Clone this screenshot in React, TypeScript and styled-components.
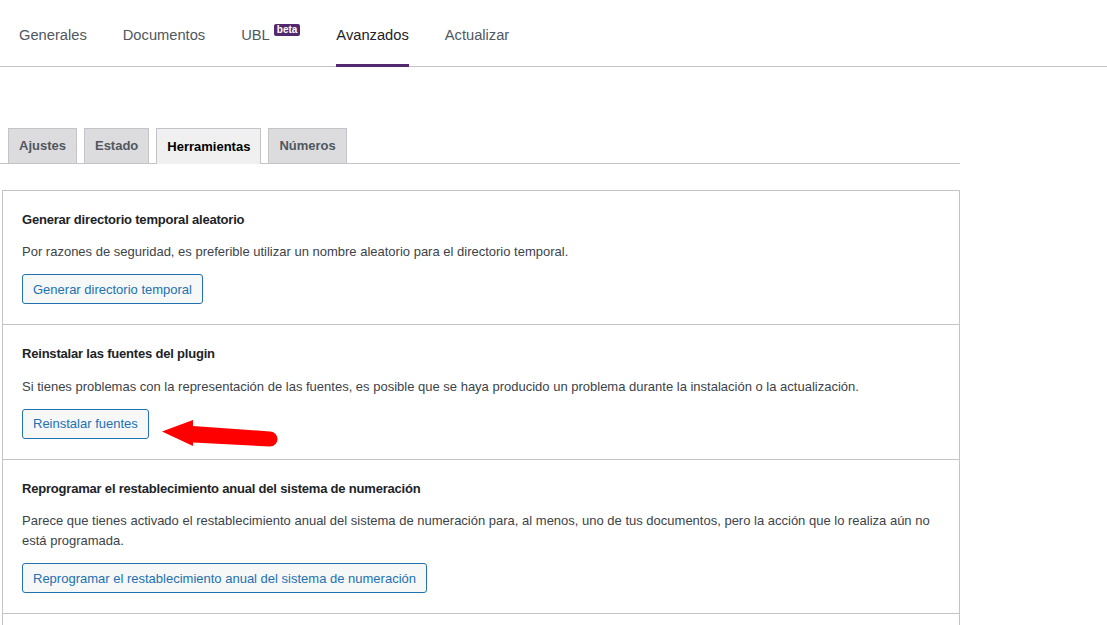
import styled, { createGlobalStyle } from 'styled-components';

const GlobalStyle = createGlobalStyle`
  html, body {
    margin: 0;
    padding: 0;
    background: #ffffff;
    font-family: 'Liberation Sans', Arial, sans-serif;
    color: #3c434a;
  }
`;

const mainTabs = [
  { label: 'Generales' },
  { label: 'Documentos' },
  { label: 'UBL', badge: 'beta' },
  { label: 'Avanzados', active: true },
  { label: 'Actualizar' },
];

const subTabs = [
  { label: 'Ajustes' },
  { label: 'Estado' },
  { label: 'Herramientas', active: true },
  { label: 'Números' },
];

type Tool = {
  title: string;
  description: string;
  action: string;
  pointer?: boolean;
};

const tools: Tool[] = [
  {
    title: 'Generar directorio temporal aleatorio',
    description:
      'Por razones de seguridad, es preferible utilizar un nombre aleatorio para el directorio temporal.',
    action: 'Generar directorio temporal',
  },
  {
    title: 'Reinstalar las fuentes del plugin',
    description:
      'Si tienes problemas con la representación de las fuentes, es posible que se haya producido un problema durante la instalación o la actualización.',
    action: 'Reinstalar fuentes',
    pointer: true,
  },
  {
    title: 'Reprogramar el restablecimiento anual del sistema de numeración',
    description:
      'Parece que tienes activado el restablecimiento anual del sistema de numeración para, al menos, uno de tus documentos, pero la acción que lo realiza aún no está programada.',
    action: 'Reprogramar el restablecimiento anual del sistema de numeración',
  },
];

const RedArrow = () => (
  <ArrowSvg width='130' height='40' viewBox='0 0 130 40'>
    <path
      d='M31 10 L108 15.5 A7.5 7.5 0 0 1 108 30.5 L31 26.5 Z'
      fill='#ff0000'
    />
    <path d='M0 15.5 L31 4 L31 30 Z' fill='#ff0000' />
  </ArrowSvg>
);

const App = () => {
  return (
    <>
      <GlobalStyle />
      <Page>
        <MainNav>
          {mainTabs.map((tab) => (
            <MainTab key={tab.label} $active={!!tab.active}>
              {tab.label}
              {tab.badge && <Badge>{tab.badge}</Badge>}
            </MainTab>
          ))}
        </MainNav>

        <Content>
          <SubNav>
            {subTabs.map((tab) => (
              <SubTab key={tab.label} $active={!!tab.active}>
                {tab.label}
              </SubTab>
            ))}
          </SubNav>

          <ToolBox>
            {tools.map((tool) => (
              <ToolSection key={tool.title}>
                <ToolTitle>{tool.title}</ToolTitle>
                <ToolDescription>{tool.description}</ToolDescription>
                <ActionRow>
                  <ActionButton>{tool.action}</ActionButton>
                  {tool.pointer && <RedArrow />}
                </ActionRow>
              </ToolSection>
            ))}
            <ToolSection />
          </ToolBox>
        </Content>
      </Page>
    </>
  );
};

export default App;

const Page = styled.div`
  width: 1107px;
  height: 625px;
  overflow: hidden;
`;

const MainNav = styled.nav`
  display: flex;
  align-items: flex-end;
  gap: 36px;
  height: 66px;
  padding-left: 19px;
  border-bottom: 1px solid #c3c4c7;
`;

const MainTab = styled.div<{ $active: boolean }>`
  display: flex;
  align-items: flex-start;
  height: 67px;
  margin-bottom: -1px;
  padding-top: 25px;
  box-sizing: border-box;
  font-size: 14.7px;
  line-height: 20px;
  color: ${({ $active }) => ($active ? '#1d2327' : '#50575e')};
  border-bottom: 3px solid ${({ $active }) => ($active ? '#52286e' : 'transparent')};
`;

const Badge = styled.span`
  margin-left: 4px;
  margin-top: -1px;
  padding: 0 3px;
  height: 12px;
  font-size: 10px;
  line-height: 12px;
  font-weight: 700;
  color: #ffffff;
  background: #52286e;
  border-radius: 2px;
`;

const Content = styled.div`
  width: 960px;
  padding-top: 61px;
`;

const SubNav = styled.div`
  display: flex;
  align-items: flex-end;
  gap: 7px;
  padding-left: 8px;
  border-bottom: 1px solid #c3c4c7;
`;

const SubTab = styled.div<{ $active: boolean }>`
  box-sizing: border-box;
  height: ${({ $active }) => ($active ? '36px' : '35px')};
  margin-bottom: ${({ $active }) => ($active ? '-1px' : '0')};
  padding: 0 10px 1px;
  display: flex;
  align-items: center;
  font-size: 13px;
  font-weight: 700;
  color: ${({ $active }) => ($active ? '#000000' : '#50575e')};
  background: ${({ $active }) => ($active ? '#f0f0f1' : '#dcdcde')};
  border: 1px solid #c3c4c7;
  border-bottom: none;
`;

const ToolBox = styled.div`
  margin: 26px 0 0 2px;
  border: 1px solid #c3c4c7;
  border-bottom: none;
  background: #ffffff;
`;

const ToolSection = styled.section`
  display: flex;
  flex-direction: column;
  padding: 20px 20px 20px 19px;
  border-bottom: 1px solid #c3c4c7;
  min-height: 40px;
`;

const ToolTitle = styled.h4`
  margin: 0;
  font-size: 13px;
  line-height: 18.4px;
  font-weight: 700;
  letter-spacing: -0.2px;
  color: #1d2327;
`;

const ToolDescription = styled.p`
  margin: 13px 0 12px;
  font-size: 13px;
  line-height: 20px;
  color: #3c434a;
`;

const ActionRow = styled.div`
  position: relative;
  display: flex;
  align-items: center;
`;

const ActionButton = styled.button`
  height: 30px;
  padding: 0 10px;
  font-family: inherit;
  font-size: 13px;
  color: #2271b1;
  background: #f6f7f7;
  border: 1px solid #2271b1;
  border-radius: 3px;
  cursor: pointer;
`;

const ArrowSvg = styled.svg`
  position: absolute;
  left: 140px;
  top: 7px;
`;
